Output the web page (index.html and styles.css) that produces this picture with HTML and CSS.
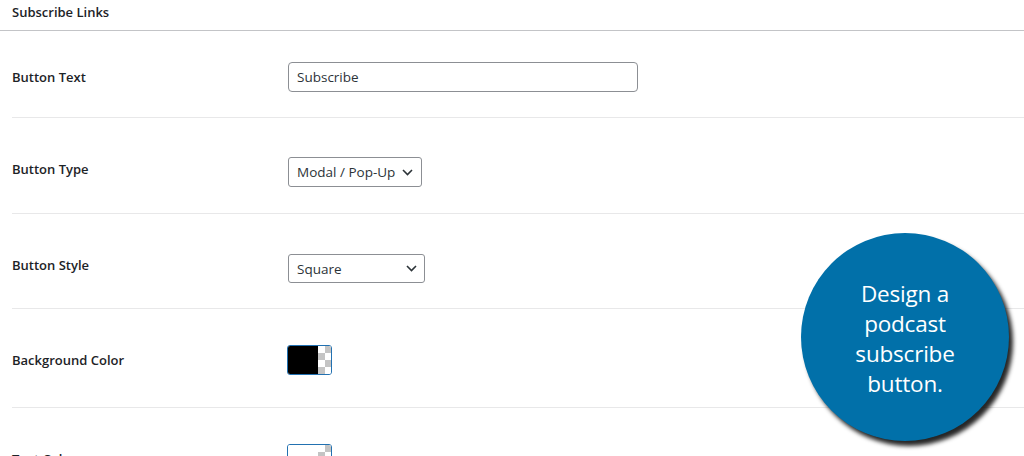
FILE: index.html
```html
<!DOCTYPE html>
<html lang="en">
<head>
    <meta charset="UTF-8">
    <title>Subscribe Links</title>
    <link rel="stylesheet" href="styles.css">
</head>
<body>
<div class="page">
    <div class="section-head">Subscribe Links</div>

    <div class="form">
        <div class="row row-text">
            <div class="label">Button Text</div>
            <div class="field"><input class="text-input" type="text" value="Subscribe"></div>
        </div>
        <div class="row row-type">
            <div class="label">Button Type</div>
            <div class="field">
                <div class="select select-type">
                    <span>Modal / Pop-Up</span>
                    <svg width="11" height="7" viewBox="0 0 11 7"><path d="M1 1l4.5 4.5L10 1" fill="none" stroke="#2c3338" stroke-width="1.6"/></svg>
                </div>
            </div>
        </div>
        <div class="row row-style">
            <div class="label">Button Style</div>
            <div class="field">
                <div class="select select-style">
                    <span>Square</span>
                    <svg width="11" height="7" viewBox="0 0 11 7"><path d="M1 1l4.5 4.5L10 1" fill="none" stroke="#2c3338" stroke-width="1.6"/></svg>
                </div>
            </div>
        </div>
        <div class="row row-bg">
            <div class="label">Background Color</div>
            <div class="field">
                <div class="swatch"><span class="swatch-color black"></span><span class="swatch-alpha"></span></div>
            </div>
        </div>
        <div class="row row-tc">
            <div class="label">Text Color</div>
            <div class="field">
                <div class="swatch"><span class="swatch-color white"></span><span class="swatch-alpha"></span></div>
            </div>
        </div>
    </div>

    <div class="badge">
        <p>Design a<br>podcast<br>subscribe<br>button.</p>
    </div>
</div>
</body>
</html>
```

FILE: styles.css
```css
*{
    padding: 0;
    margin: 0;
    box-sizing: border-box;
}
html, body{
    height: 100%;
    overflow: hidden;
}
body{
    background: #ffffff;
    color: #1d2327;
    font-family: "Open Sans", "Noto Sans", sans-serif;
    font-size: 13px;
}
.page{
    position: relative;
    height: 456px;
    overflow: hidden;
}
.section-head{
    height: 31px;
    padding: 4px 12px 0;
    font-weight: 600;
    line-height: 17px;
    border-bottom: 1px solid #c3c4c7;
}
.form{
    margin-left: 12px;
}
.row{
    display: flex;
    align-items: center;
    border-bottom: 1px solid #e8e8e9;
}
.row-text{
    padding: 31px 0 25px;
}
.row-type{
    padding: 39px 0 26px;
}
.row-type .label{
    margin-bottom: 6px;
}
.row-style{
    padding: 40px 0 25px;
}
.row-style .label{
    margin-bottom: 8px;
}
.row-bg{
    padding: 36px 0 32px;
}
.row-tc{
    padding: 36px 0 30px;
}
.label{
    width: 275px;
    font-weight: 600;
    line-height: 18px;
}
.field{
    padding-left: 1px;
}
.text-input{
    display: block;
    width: 350px;
    height: 30px;
    padding: 0 8px;
    border: 1px solid #8c8f94;
    border-radius: 4px;
    font-family: inherit;
    font-size: 13.5px;
    color: #2c3338;
    background: #fff;
}
.select{
    display: flex;
    align-items: center;
    justify-content: space-between;
    height: 30px;
    padding: 0 8px 0 8px;
    border: 1px solid #8c8f94;
    border-radius: 3px;
    font-size: 13.5px;
    color: #2c3338;
}
.select-type{
    width: 134px;
    height: 30px;
}
.select-style{
    width: 137px;
    height: 29px;
    padding-right: 7px;
}
.swatch{
    display: flex;
    width: 45px;
    height: 30px;
    margin-left: -1px;
    border: 1px solid #2271b1;
    border-radius: 3px;
    overflow: hidden;
}
.swatch-color{
    width: 30px;
}
.swatch-color.black{
    background: #000;
}
.swatch-color.white{
    background: #fff;
}
.swatch-alpha{
    flex: 1;
    background-color: #fff;
    background-image:
        linear-gradient(45deg, #c4c4c4 25%, transparent 25%, transparent 75%, #c4c4c4 75%),
        linear-gradient(45deg, #c4c4c4 25%, transparent 25%, transparent 75%, #c4c4c4 75%);
    background-size: 14px 14px;
    background-position: 0 0, 7px 7px;
}
.badge{
    position: absolute;
    left: 801px;
    top: 233px;
    width: 208px;
    height: 208px;
    border-radius: 50%;
    background: #0170a9;
    box-shadow: 4px 5px 4px rgba(0, 0, 0, 0.85);
    display: flex;
    align-items: center;
    justify-content: center;
    text-align: center;
}
.badge p{
    color: #fff;
    font-family: "Open Sans", sans-serif;
    font-size: 22.5px;
    line-height: 30px;
    letter-spacing: -0.2px;
    margin-top: 4px;
}
```
